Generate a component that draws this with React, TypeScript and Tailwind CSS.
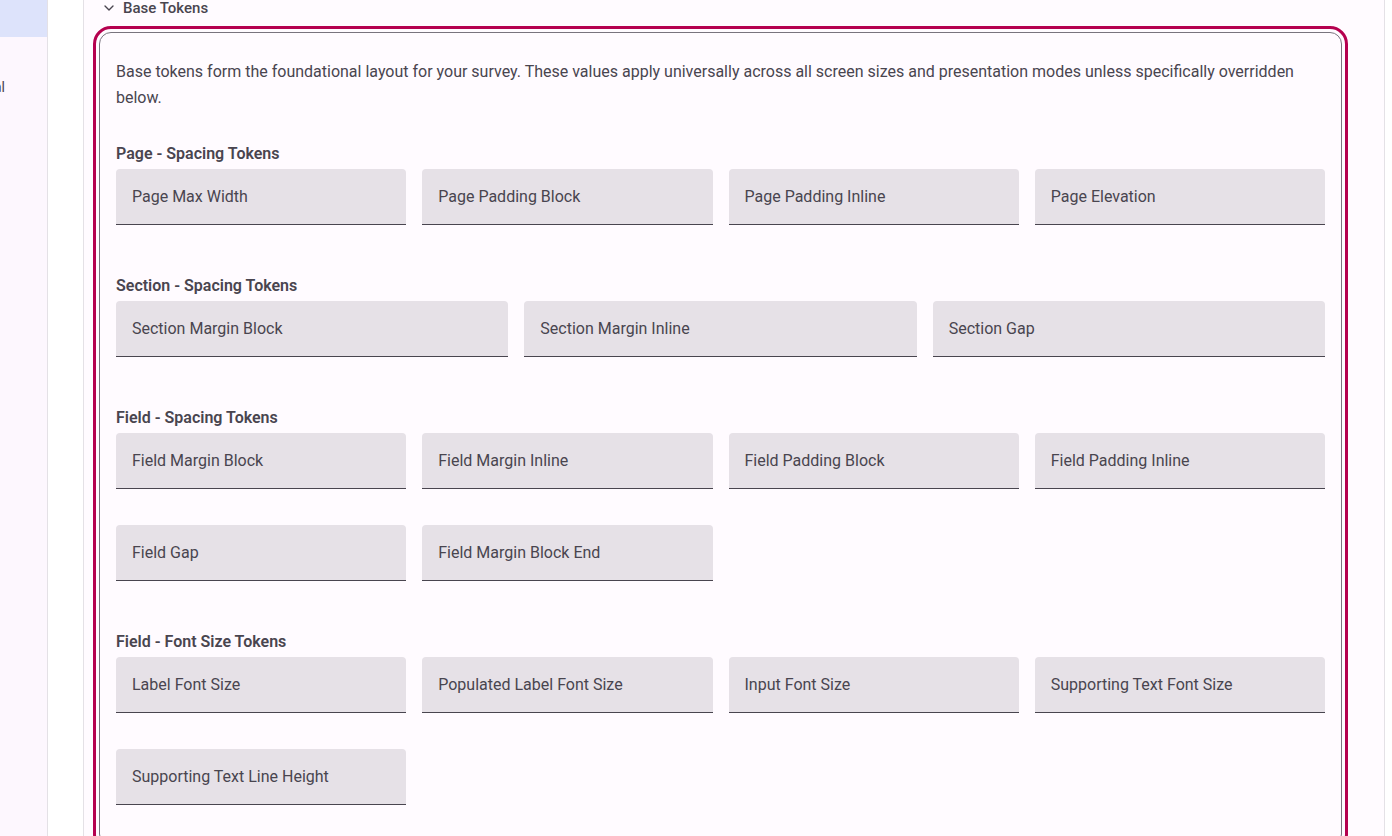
import { ChevronDown } from 'lucide-react';

const sections: { title: string; cols: string; items: string[] }[] = [
  { title: 'Page - Spacing Tokens', cols: 'grid-cols-4', items: ['Page Max Width', 'Page Padding Block', 'Page Padding Inline', 'Page Elevation'] },
  { title: 'Section - Spacing Tokens', cols: 'grid-cols-3', items: ['Section Margin Block', 'Section Margin Inline', 'Section Gap'] },
  {
    title: 'Field - Spacing Tokens',
    cols: 'grid-cols-4',
    items: ['Field Margin Block', 'Field Margin Inline', 'Field Padding Block', 'Field Padding Inline', 'Field Gap', 'Field Margin Block End'],
  },
  {
    title: 'Field - Font Size Tokens',
    cols: 'grid-cols-4',
    items: ['Label Font Size', 'Populated Label Font Size', 'Input Font Size', 'Supporting Text Font Size', 'Supporting Text Line Height'],
  },
];

export default function App() {
  return (
    <div className="flex h-[836px] overflow-hidden bg-white text-[#49454f]" style={{ fontFamily: 'Roboto, "Liberation Sans", sans-serif' }}>
      <aside className="w-[48px] shrink-0 border-r border-[#e4e1e6] bg-[#fdf7fe] overflow-hidden">
        <div className="h-[37px] bg-[#dde3fb]" />
        <div className="mt-[40px] text-[14px] -ml-[6px] whitespace-nowrap">al</div>
      </aside>
      <main className="ml-[35px] w-[1302px] shrink-0 border-x border-[#e4e1e6] bg-[#fffbff] pl-[9px] pr-[36px] -mt-[10px]">
        <div className="flex items-center gap-[6px] h-[36px] pl-[8px] text-[15px] font-medium">
          <ChevronDown size={16} strokeWidth={2} />
          <span>Base Tokens</span>
        </div>
        <div className="rounded-[18px] border-[3px] border-[#b5004f] p-[3px]">
          <div className="rounded-[12px] border border-[#79747e] px-[16px] pt-[26px] pb-[40px]">
            <p className="text-[16px] leading-[26px]">
              Base tokens form the foundational layout for your survey. These values apply universally across all screen sizes and presentation modes unless specifically overridden below.
            </p>
            <div className="mt-[33px] flex flex-col gap-[51px]">
              {sections.map((s) => (
                <section key={s.title}>
                  <h3 className="text-[16px] font-semibold leading-[20px] mb-[5px]">{s.title}</h3>
                  <div className={`grid ${s.cols} gap-x-[16px] gap-y-[36px]`}>
                    {s.items.map((it) => (
                      <div key={it} className="h-[56px] flex items-center px-[16px] bg-[#e6e1e7] border-b border-[#49454f] rounded-t-[4px] text-[16px]">
                        {it}
                      </div>
                    ))}
                  </div>
                </section>
              ))}
            </div>
          </div>
        </div>
      </main>
    </div>
  );
}
